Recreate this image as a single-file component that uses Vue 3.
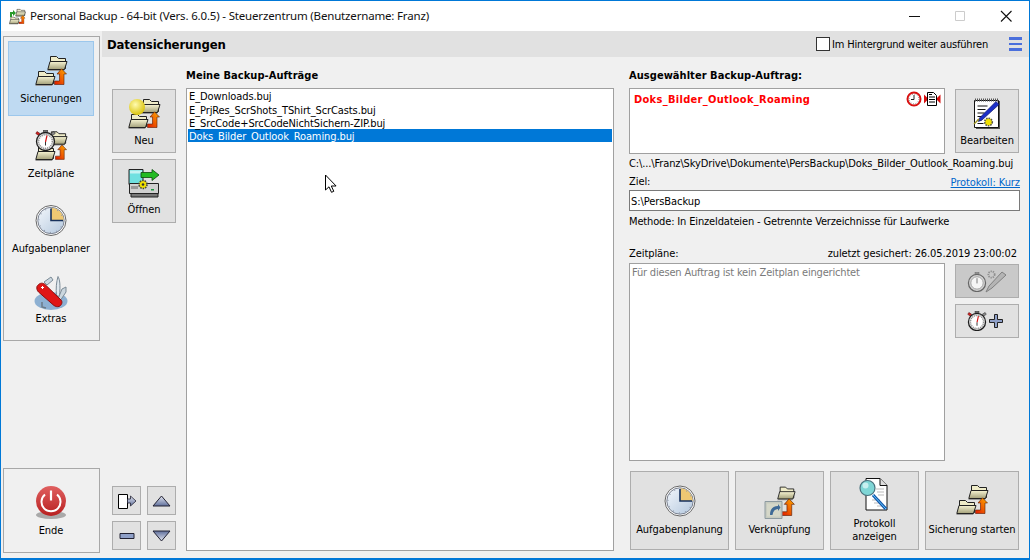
<script setup>
const jobs = [
  'E_Downloads.buj',
  'E_PrjRes_ScrShots_TShirt_ScrCasts.buj',
  'E_SrcCode+SrcCodeNichtSichern-ZIP.buj',
  'Doks_Bilder_Outlook_Roaming.buj'
]
const navItems = [
  { label: 'Sicherungen', icon: 'backup', w: 33, h: 31, active: true },
  { label: 'Zeitpläne', icon: 'schedule', w: 33, h: 31 },
  { label: 'Aufgabenplaner', icon: 'clock', w: 32, h: 31 },
  { label: 'Extras', icon: 'knife', w: 34, h: 36, tight: true }
]
</script>

<template>
  <div class="win">
    <svg class="defs" width="0" height="0" aria-hidden="true">
      <defs>
        <linearGradient id="gF" x1="0" y1="0" x2="0" y2="1"><stop offset="0" stop-color="#f7f4d2"/><stop offset="1" stop-color="#a3a07a"/></linearGradient>
        <linearGradient id="gA" x1="0" y1="1" x2="1" y2="0"><stop offset="0" stop-color="#e01800"/><stop offset="1" stop-color="#ffb000"/></linearGradient>
        <linearGradient id="gB" x1="0" y1="0" x2="0" y2="1"><stop offset="0" stop-color="#e3e6f0"/><stop offset="1" stop-color="#5f6f9c"/></linearGradient>
        <linearGradient id="gBd" x1="0" y1="0" x2="0" y2="1"><stop offset="0" stop-color="#5f6f9c"/><stop offset="1" stop-color="#e3e6f0"/></linearGradient>
        <linearGradient id="gC" x1="0" y1="0" x2="1" y2="1"><stop offset="0" stop-color="#f2f6fb"/><stop offset="1" stop-color="#b4c8de"/></linearGradient>
        <linearGradient id="gP" x1="0" y1="0" x2="0" y2="1"><stop offset="0" stop-color="#e06060"/><stop offset="1" stop-color="#b82020"/></linearGradient>
        <radialGradient id="gS" cx=".4" cy=".35" r=".7"><stop offset="0" stop-color="#fffbb0"/><stop offset="1" stop-color="#d8c000"/></radialGradient>

        <symbol id="folder" viewBox="0 0 21 16">
          <path d="M2 14h16l-1 2H0z" fill="#9a9a9a"/>
          <path d="M3.500 1.500h6l2 2h7v10h-15z" fill="#efecc8" stroke="#222"/>
          <path d="M.8 14.500 3 6.500h17l-2.500 8z" fill="url(#gF)" stroke="#222"/>
        </symbol>
        <symbol id="arrowUp" viewBox="0 0 13 17">
          <path d="M.5 13h5V6H3L7.500.8 12.500 6H10v10.500H.5z" fill="url(#gA)" stroke="#5a1a00" stroke-width=".6"/>
        </symbol>
        <symbol id="backup" viewBox="0 0 33 31">
          <use href="#folder" x="12" y="0" width="21" height="16"/>
          <use href="#arrowUp" x="19" y="13" width="13" height="17"/>
          <use href="#folder" x="0" y="15" width="21" height="16"/>
        </symbol>
        <symbol id="watch" viewBox="0 0 21 21">
          <path d="M8.500 0h4v2.500h-4z" fill="#777" stroke="#222" stroke-width=".6"/>
          <path d="M2 1.500 5 3.500 3.500 5.500.8 3.500z" fill="#d02020" stroke="#400" stroke-width=".5"/>
          <path d="M19 1.500 16 3.500 17.500 5.500 20.200 3.500z" fill="#888" stroke="#222" stroke-width=".5"/>
          <circle cx="10.500" cy="11.500" r="9" fill="#dcdcdc" stroke="#1c1c1c" stroke-width="1.300"/>
          <circle cx="10.500" cy="11.500" r="6.800" fill="#fff" stroke="#8a8a8a" stroke-width="1.500" stroke-dasharray="1 1"/>
          <path d="M10.500 12 12 5.500" stroke="#d41010" stroke-width="1.200" fill="none"/>
          <path d="M10.500 12V15.500" stroke="#333" fill="none"/>
        </symbol>
        <symbol id="watchGrey" viewBox="0 0 21 21">
          <path d="M8.500 0h4v2.500h-4z" fill="#999" stroke="#666" stroke-width=".6"/>
          <circle cx="10.500" cy="11.500" r="9" fill="#d4d4d4" stroke="#666" stroke-width="1.300"/>
          <circle cx="10.500" cy="11.500" r="6.500" fill="#f5f5f5" stroke="#a0a0a0"/>
          <path d="M10.500 12V6.500" stroke="#777" fill="none"/>
        </symbol>
        <symbol id="schedule" viewBox="0 0 33 31">
          <use href="#folder" x="13" y="0" width="20" height="16"/>
          <use href="#arrowUp" x="20" y="14" width="12" height="16"/>
          <use href="#folder" x="0" y="15" width="21" height="16"/>
          <use href="#watch" x="0" y="0" width="21" height="21"/>
        </symbol>
        <symbol id="clock" viewBox="0 0 32 31">
          <circle cx="16" cy="15.500" r="15" fill="#fff" stroke="#666"/>
          <circle cx="16" cy="15.500" r="13.200" fill="url(#gC)" stroke="#7c8290"/>
          <path d="M16 15.500V2.800a12.700 12.700 0 0 1 12.700 12.700z" fill="#eec873"/>
          <circle cx="16" cy="15.500" r="12" fill="none" stroke="#8f98a8" stroke-width="1.200" stroke-dasharray="1 5.280"/>
          <path d="M16 3.500v12h12" fill="none" stroke="#17315c" stroke-width="1.600"/>
        </symbol>
        <symbol id="knife" viewBox="0 0 34 36">
          <ellipse cx="17" cy="26" rx="16.500" ry="9" fill="#8db0d2"/>
          <path d="M24 1.500c1.800 3 2.500 8 1.500 20l-3-1c-.8-7 0-14 1.500-19z" fill="#dfe8ee" stroke="#7b8a96"/>
          <path d="M10 7 17 2 19 5 13 10z" fill="#cbd7df" stroke="#7b8a96"/>
          <path d="M28 14 32 12 32 17 26 26 24 24z" fill="#cbd7df" stroke="#7b8a96"/>
          <path d="M8 27v5l4 1" fill="none" stroke="#6b7a86" stroke-width="1.500"/>
          <path d="M3 11.500c2-3.500 5-4 7.500-2.500L27 25c2 2 .5 5.500-2 6.500-2 .5-3.500 0-5-1L4.500 17c-1.500-1.500-2-3.500-1.500-5.500z" fill="#e01616" stroke="#8b0d0d"/>
          <path d="M7 12.500h3M8.500 11v3" stroke="#fff" stroke-width="1"/>
        </symbol>
        <symbol id="power" viewBox="0 0 30 33">
          <ellipse cx="15" cy="29" rx="15" ry="4" fill="#a9a9a9"/>
          <circle cx="15" cy="15" r="15" fill="url(#gP)"/>
          <path d="M9 8.500a9.500 9.500 0 1 0 12 0" fill="none" stroke="#fff" stroke-width="2"/>
          <path d="M15 4.500v10" stroke="#fff" stroke-width="2.200"/>
        </symbol>
        <symbol id="neu" viewBox="0 0 33 31">
          <use href="#backup" x="0" y="0" width="33" height="31"/>
          <circle cx="9" cy="9" r="8" fill="url(#gS)"/>
        </symbol>
        <symbol id="open" viewBox="0 0 32 30">
          <path d="M1 1.500h14v15H1z" fill="#6fe0e0" stroke="#222"/>
          <path d="M2 2.500h12v3H2z" fill="#c5f2f2"/>
          <path d="M1.500 15.500h29v10H1.500z" fill="#d0d0d0" stroke="#222"/>
          <path d="M3 25.500h27v3.500H3z" fill="#777" stroke="#222"/>
          <path d="M3 18h7v3H3z" fill="#999"/>
          <path d="M23 21h3v1.500h-3z" fill="#1c9a40"/>
          <path d="M13 4.500h11v-3L31 7l-7 5.500v-3H13z" fill="#22bb22" stroke="#0b4a0b" stroke-width=".8"/>
          <circle cx="15" cy="16.500" r="4" fill="#f0e000" stroke="#444" stroke-width="1.600" stroke-dasharray="1.500 1"/>
          <circle cx="15" cy="16.500" r="1.300" fill="#333"/>
        </symbol>
        <symbol id="notepad" viewBox="0 0 28 32">
          <path d="M3 3h24v28H3z" fill="#555"/>
          <path d="M1.500 2.500h24v27h-24z" fill="#fff" stroke="#111"/>
          <path d="M2 2h23" stroke="#555" stroke-width="3" stroke-dasharray="1 1"/>
          <path d="M4.500 8h10M4.500 11.500h8M4.500 15h7M4.500 18.500h5M4.500 22h4M4.500 25.500h6" stroke="#111" fill="none"/>
          <path d="M23 3.500 26 6.500 9 22 5.500 23.500 6.500 20z" fill="#1b2fc8" stroke="#0b1366" stroke-width=".7"/>
          <path d="M6 21 1 26" stroke="#9a9020" stroke-width="1.500"/>
          <circle cx="15.500" cy="24" r="3.800" fill="#f0e000" stroke="#555" stroke-width="1.600" stroke-dasharray="1.500 1"/>
        </symbol>
        <symbol id="shortcut" viewBox="0 0 32 34">
          <use href="#folder" x="13" y="0" width="19" height="16"/>
          <use href="#arrowUp" x="17" y="13" width="14" height="18"/>
          <path d="M1 16.500h17v17H1z" fill="#c7cbc0" stroke="#8d9aa0"/>
          <path d="M3 18.500h13v13H3z" fill="#dcdccc" opacity=".7"/>
          <path d="M6 30c0-6 3-9 8-9v-2l2.500 3.500L14 26v-2c-3 0-5 2-5.500 6z" fill="#3f6a96"/>
        </symbol>
        <symbol id="log" viewBox="0 0 31 35">
          <path d="M7 1.500h14l7 7v24.500H7z" fill="#fff" stroke="#111"/>
          <path d="M21 1.500v7h7" fill="#ddd" stroke="#111"/>
          <path d="M17 12h8M18 15h7M19 18h6M13 23h8M15 26h6M18 29h7" stroke="#bbb"/>
          <path d="M14 18 27 32" stroke="#15a" stroke-width="3.200"/>
          <path d="M14 18 27 32" stroke="#6cf" stroke-width="1"/>
          <circle cx="8.500" cy="11" r="7.500" fill="#7fd6d6" stroke="#48707c" stroke-width="1.200"/>
          <circle cx="6.500" cy="8.500" r="3" fill="#c8f0f0"/>
        </symbol>
        <symbol id="gear" viewBox="0 0 10 10">
          <circle cx="5" cy="5" r="3.500" fill="none" stroke="#8f8f8f" stroke-width="2" stroke-dasharray="1.500 1"/>
        </symbol>
      </defs>
    </svg>

    <header class="titlebar">
      <svg class="appicon" width="17" height="17">
        <use href="#backup"/>
        <path d="M1 9V4h3V2l3 3-3 3V6H3v3z" fill="#2a9a2a"/>
      </svg>
      <span class="apptitle">Personal Backup - 64-bit (Vers. 6.0.5) - Steuerzentrum (Benutzername: Franz)</span>
      <div class="winctrls">
        <svg width="46" height="30"><path d="M18 15.500h11" stroke="#111"/></svg>
        <svg width="46" height="30"><path d="M18.500 10.500h9v9h-9z" fill="none" stroke="#ccc"/></svg>
        <svg width="46" height="30"><path d="M18 10l10.500 10.500M28.500 10 18 20.500" stroke="#111" stroke-width="1.100"/></svg>
      </div>
    </header>

    <div class="main">
      <aside class="sidebar">
        <nav class="panel navpanel">
          <div v-for="n in navItems" :key="n.label" class="navitem" :class="{ active: n.active, tight: n.tight }">
            <svg :width="n.w" :height="n.h"><use :href="'#' + n.icon"/></svg>
            <span>{{ n.label }}</span>
          </div>
        </nav>
        <div class="panel endpanel">
          <svg width="30" height="33"><use href="#power"/></svg>
          <span>Ende</span>
        </div>
      </aside>

      <section class="page">
        <div class="pagehead">
          <strong class="pagetitle">Datensicherungen</strong>
          <label class="bg"><span class="check"></span>Im Hintergrund weiter ausführen</label>
          <span class="burger"><i></i><i></i><i></i></span>
        </div>

        <div class="content">
          <div class="tools">
            <button class="btn tool"><svg width="33" height="31"><use href="#neu"/></svg><span>Neu</span></button>
            <button class="btn tool"><svg width="32" height="30"><use href="#open"/></svg><span>Öffnen</span></button>
            <div class="minis">
              <button class="btn mini"><svg width="20" height="16"><path d="M1.500 1.500h9v14h-9z" fill="#fff" stroke="#000"/><path d="M10.500 6h3V3l5.500 5-5.500 5v-3h-3z" fill="url(#gB)" stroke="#223" stroke-width=".8"/></svg></button>
              <button class="btn mini"><svg width="19" height="12"><path d="M9.500 1 18 11H1z" fill="url(#gB)" stroke="#223"/></svg></button>
              <button class="btn mini"><svg width="16" height="6"><path d="M1 .5h14v5H1z" fill="#8fa0c8" stroke="#223"/></svg></button>
              <button class="btn mini"><svg width="19" height="12"><path d="M9.500 11 18 1H1z" fill="url(#gBd)" stroke="#223"/></svg></button>
            </div>
          </div>

          <div class="jobs">
            <h3 class="label">Meine Backup-Aufträge</h3>
            <div class="listbox">
              <div v-for="(j, i) in jobs" :key="j" class="row" :class="{ sel: i === 3 }">{{ j }}</div>
              <svg class="cursor" width="13" height="20"><path d="M1.500 1v15l3.500-3.200 2.500 5.500 2.300-1-2.500-5.300h4.800z" fill="#fff" stroke="#000"/></svg>
            </div>
          </div>

          <div class="detail">
            <h3 class="label">Ausgewählter Backup-Auftrag:</h3>
            <div class="toprow">
              <div class="jobbox">
                <strong class="jobname">Doks_Bilder_Outlook_Roaming</strong>
                <span class="flags">
                  <svg width="16" height="16"><circle cx="8" cy="8" r="6.500" fill="#fff" stroke="#d81010" stroke-width="2"/><path d="M8 4v4.500H5" fill="none" stroke="#222"/><circle cx="8" cy="8" r="4.800" fill="none" stroke="#555" stroke-width=".8" stroke-dasharray=".8 1.700"/></svg>
                  <svg width="17" height="14"><path d="M0 2.500 4 6.500v1L0 11.500zM16.500 2.500l-4 4v1l4 4z" fill="#d81010"/><path d="M3.500.5h6l3 3v10h-9z" fill="#fff" stroke="#000"/><path d="M5 5h6M5 7.500h6M5 10h6" stroke="#000"/><path d="M5 2.500h3" stroke="#000"/></svg>
                </span>
              </div>
              <button class="btn tool edit"><svg width="28" height="32"><use href="#notepad"/></svg><span>Bearbeiten</span></button>
            </div>
            <div class="path">C:\...\Franz\SkyDrive\Dokumente\PersBackup\Doks_Bilder_Outlook_Roaming.buj</div>
            <div class="between ziel"><span>Ziel:</span><a class="link">Protokoll: Kurz</a></div>
            <div class="target">S:\PersBackup</div>
            <div class="method">Methode: In Einzeldateien - Getrennte Verzeichnisse für Laufwerke</div>
            <div class="between sched"><span>Zeitpläne:</span><span class="last">zuletzt gesichert: 26.05.2019 23:00:02</span></div>
            <div class="schedrow">
              <div class="schedbox">Für diesen Auftrag ist kein Zeitplan eingerichtet</div>
              <div class="schedbtns">
                <button class="btn wide disabled">
                  <svg width="40" height="24">
                    <use href="#watchGrey" x="0" y="3" width="20" height="20"/>
                    <use href="#gear" x="20" y="1" width="9" height="9"/>
                    <path d="M19 23 22 17 35 3l4 3-14 13z" fill="#b4b4b4" stroke="#808080"/>
                  </svg>
                </button>
                <button class="btn wide">
                  <svg width="40" height="22">
                    <use href="#watch" x="0" y="1" width="20" height="20"/>
                    <path d="M27.500 4.500h3v5h5v3h-5v5h-3v-5h-5v-3h5z" fill="#8fa0c8" stroke="#222"/>
                  </svg>
                </button>
              </div>
            </div>
            <div class="actions">
              <button class="btn act a1"><svg width="32" height="32"><use href="#clock"/></svg><span>Aufgabenplanung</span></button>
              <button class="btn act a2"><svg width="32" height="34"><use href="#shortcut"/></svg><span>Verknüpfung</span></button>
              <button class="btn act a3"><svg width="31" height="35"><use href="#log"/></svg><span>Protokoll<br>anzeigen</span></button>
              <button class="btn act a4"><svg width="33" height="31"><use href="#backup"/></svg><span>Sicherung starten</span></button>
            </div>
          </div>
        </div>
      </section>
    </div>
  </div>
</template>

<style>
html, body { margin: 0; padding: 0; overflow: hidden; }
</style>

<style scoped>
* { box-sizing: border-box; }
.defs { position: absolute; overflow: hidden; }
.win {
  width: 1030px; height: 560px;
  border: 1px solid #0078d7; border-bottom-width: 2px;
  background: #f0f0f0;
  display: flex; flex-direction: column;
  font: 11px/13px "DejaVu Sans Condensed", "DejaVu Sans", sans-serif;
  letter-spacing: -.07px;
  color: #000;
}
svg { display: block; flex: none; }
.titlebar {
  height: 30px; flex: none; background: #fff;
  display: flex; align-items: center; padding-left: 8px;
}
.appicon { margin-right: 4px; }
.apptitle { font: 11.5px/16px "Noto Sans", sans-serif; letter-spacing: -.17px; color: #111; }
.winctrls { margin-left: auto; display: flex; }

.main { flex: 1; display: flex; min-height: 0; }
.sidebar {
  width: 101px; flex: none; padding: 5px 0 5px 2px;
  display: flex; flex-direction: column; justify-content: space-between;
}
.panel { width: 97px; border: 1px solid #a8a8a8; background: #f0f0f0; }
.navpanel { height: 305px; padding: 4px; }
.navitem {
  height: 75px; padding-top: 14px; width: 86px;
  display: flex; flex-direction: column; align-items: center;
  border: 1px solid transparent; white-space: nowrap;
}
.navitem svg { margin-top: -1px; }
.navitem span { margin-top: 6px; }
.navitem.active { background: #bfdaf2; border-color: #9cc7ec; }
.navitem.tight { padding-top: 9px; }
.navitem.tight span { margin-top: 1px; }
.endpanel {
  height: 85px; padding: 17px 1px 0 0;
  display: flex; flex-direction: column; align-items: center;
}
.endpanel span { margin-top: 5px; }

.page { flex: 1; min-width: 0; display: flex; flex-direction: column; }
.pagehead {
  height: 26px; flex: none; background: #e1e1e1;
  display: flex; align-items: center; padding: 0 7px 0 5px;
}
.pagetitle { font-size: 13px; letter-spacing: -.12px; }
.bg { margin-left: auto; display: flex; align-items: center; letter-spacing: -.2px; }
.check { width: 14px; height: 14px; border: 1px solid #333; background: #fff; margin-right: 2px; }
.burger { width: 13px; margin-left: 21px; display: flex; flex-direction: column; gap: 3px; }
.burger i { display: block; height: 2.500px; background: #4a6fdc; }

.content { flex: 1; min-height: 0; display: flex; padding: 0 9px 7px 10px; }
.btn {
  background: #e1e1e1; border: 1px solid #adadad; padding: 0; margin: 0;
  font: inherit; letter-spacing: inherit; color: inherit;
  display: flex; flex-direction: column; align-items: center;
}
.tools { width: 64px; flex: none; padding: 32px 0 1px; display: flex; flex-direction: column; gap: 6px; }
.tool { width: 64px; height: 64px; padding-top: 8px; }
.tool span { margin-top: 5px; }
.minis { margin-top: auto; display: grid; grid-template-columns: 29px 29px; gap: 6px; }
.mini { width: 29px; height: 29px; justify-content: center; }

.jobs { width: 428px; flex: none; margin-left: 10px; display: flex; flex-direction: column; }
.label { margin: 0; height: 31px; padding-top: 12px; font-size: 11px; line-height: 13px; font-weight: 700; letter-spacing: .05px; }
.listbox {
  flex: 1; position: relative; background: #fff; border: 1px solid #a0a0a0; padding: 1px;
}
.row { height: 13px; padding-left: 1px; white-space: nowrap; letter-spacing: -.1px; }
.row:nth-child(n+2) { line-height: 15px; }
.row.sel { background: #0078d7; color: #fff; }
.cursor { position: absolute; left: 137px; top: 85px; }

.detail { width: 391px; flex: none; margin-left: 15px; display: flex; flex-direction: column; }
.toprow { display: flex; justify-content: space-between; height: 66px; }
.jobbox {
  width: 316px; height: 66px; position: relative;
  background: #fff; border: 1px solid #a0a0a0; padding: 4px;
}
.jobname { color: #ff0000; font-size: 11px; letter-spacing: .3px; }
.flags { position: absolute; right: 3px; top: 2px; display: flex; align-items: center; gap: 2px; }
.edit { margin: 1px 1px 0 0; }
.edit span { margin-top: 4px; }
.path { margin-top: 3px; height: 14px; white-space: nowrap; letter-spacing: -.12px; }
.between { display: flex; justify-content: space-between; }
.ziel { margin-top: 4px; height: 15px; }
.link { color: #0066cc; text-decoration: underline; padding-top: 1px; }
.target {
  height: 21px; background: #fff; border: 1px solid #7a7a7a;
  padding: 4px 1px 0;
}
.method { margin-top: 4px; height: 14px; letter-spacing: -.15px; }
.sched { margin-top: 18px; height: 14px; padding-right: 3px; }
.last { letter-spacing: -.1px; }
.schedrow { margin-top: 2px; display: flex; justify-content: space-between; height: 198px; }
.schedbox {
  width: 316px; background: #fff; border: 1px solid #a0a0a0; padding: 2px; color: #7a7a7a; letter-spacing: -.18px;
}
.schedbtns { padding: 1px 1px 0 0; display: flex; flex-direction: column; gap: 6px; }
.wide { width: 64px; height: 34px; justify-content: center; }
.disabled { background: #c9c9c9; }
.actions { margin-top: 10px; padding-left: 1px; display: flex; gap: 6px; height: 79px; }
.act { text-align: center; }
.a1 { width: 99px; padding-top: 13px; }
.a1 span { margin-top: 6px; }
.a2 { width: 89px; padding-top: 13px; }
.a2 span { margin-top: 4px; }
.a3 { width: 89px; padding-top: 5px; }
.a3 span { margin-top: 5px; }
.a4 { width: 94px; padding-top: 12px; }
.a4 span { margin-top: 8px; }
</style>
